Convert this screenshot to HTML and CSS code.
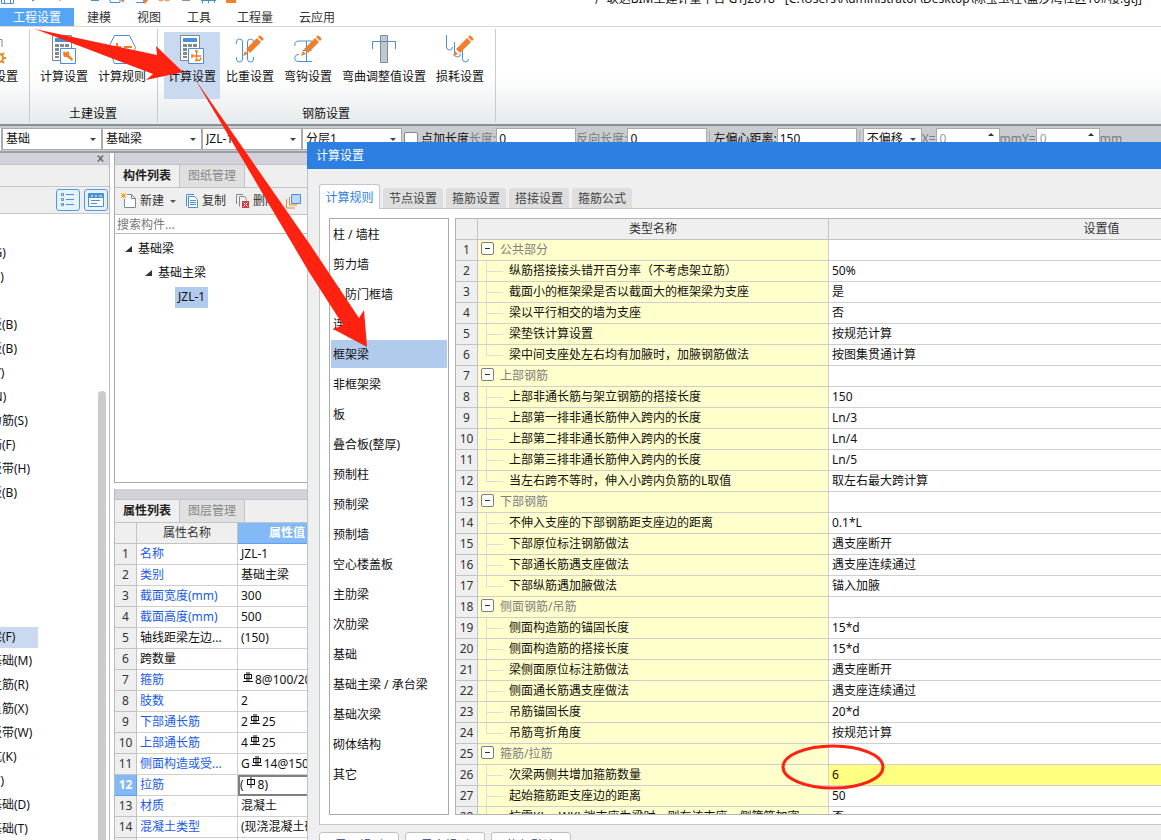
FILE: index.html
```html
<!DOCTYPE html>
<html lang="zh-CN">
<head>
<meta charset="utf-8">
<title>计算设置</title>
<link rel="stylesheet" href="styles.css">
</head>
<body>
<svg class="defs" width="0" height="0" aria-hidden="true">
  <symbol id="calc" viewBox="0 0 32 32">
    <path d="M4.500 2.500h19v25h-19z" fill="#fff" stroke="#7d8a94"/>
    <path d="M7 5h14v4H7z" fill="#4a90d9"/>
    <path d="M7 11h4v3H7zM12 11h4v3h-4zM17 11h4v3h-4zM7 15h4v3H7zM7 19h4v3H7zM7 23h4v2H7z" fill="#7d8a94"/>
    <path d="M12.500 15.500h15v15h-15z" fill="#fff" stroke="#4a90d9"/>
  </symbol>
  <symbol id="pencil" viewBox="0 0 22 22">
    <path d="M4 14 15 3l4 4L8 18zM16 2l1-1q1-1 2 0l2 2q1 1 0 2l-1 1zM3 16l3 3-5 2z" fill="#f07f2c"/>
  </symbol>
  <symbol id="rebar" viewBox="0 0 10 11">
    <path d="M1 2.500h8M1 6.500h8M1.500 2v5M8.500 2v5M4 0v10M6 0v10M0 9.500h10" fill="none" stroke="#111"/>
  </symbol>
  <symbol id="rebar-plain" viewBox="0 0 10 11">
    <path d="M1 2.500h8M1 7.500h8M1.500 2v6M8.500 2v6M5 0v11" fill="none" stroke="#111"/>
  </symbol>
</svg>

<div class="app">
  <header class="titlebar">
    <svg class="quick" width="250" height="8" viewBox="0 0 250 8" aria-hidden="true">
      <g fill="none" stroke="#4a90d9">
        <path d="M1.500 -2v6.500h12V-2M4.500 -2v6M10.500 -2v6M4 .5h7"/><path d="M29 -2l4 4 4-4"/>
        <path d="M91 1.500h8M110 3.500h10V-2M110 -2v5M136 3.500h8V-2M202.500 -2v6.500M208.500 -2v6.500M201 1.500h15M214.500 -2v6"/>
      </g>
      <path d="M56 -2l4 4 4-4" fill="none" stroke="#b9bdc2"/>
      <path d="M182 1.500h8" stroke="#89939b"/>
      <path d="M119 -2h5v5h-2zM143 -2h5v3l-3 4-2-3zM226 -2h10v6h-10z" fill="#f07f2c"/>
      <g fill="none" stroke="#f07f2c"><path d="M158 -2q0 4 3 4t3-4q0 4 3 4t4-4M238.500 -2v3"/></g>
    </svg>
    <span class="caption">广联达BIM土建计量平台 GTJ2018 - [C:\Users\Administrator\Desktop\陈宝玉柱\蓝莎湾社区10#楼.gtj]</span>
  </header>

  <nav class="menu">
    <a class="on" href="#">工程设置</a><a href="#">建模</a><a href="#">视图</a><a href="#">工具</a><a href="#">工程量</a><a href="#">云应用</a>
  </nav>

  <section class="ribbon">
    <div class="group edge">
      <div class="tools">
        <button class="tool"><svg width="32" height="32" viewBox="0 0 32 32"><path d="M6 6.500h18V14" fill="none" stroke="#7d8a94"/><circle cx="21" cy="25" r="4" fill="none" stroke="#e58a2f" stroke-width="2"/><path d="M21 18v3M21 29v3M14 25h3M25 25h3M16 20l2 2M24 28l2 2M26 20l-2 2M16 30l2-2" stroke="#e58a2f" stroke-width="2"/></svg>楼层设置</button>
      </div>
    </div>
    <div class="group">
      <div class="tools">
        <button class="tool"><svg width="32" height="32" viewBox="0 0 32 32"><use href="#calc"/><path d="M16 18l2 2 1-2q3 1 2 4l4 4-1 2-5-4q-4 1-4-4z" fill="#f07f2c"/></svg>计算设置</button>
        <button class="tool"><svg width="32" height="32" viewBox="0 0 32 32"><path d="M8.500 2.500h15l6 12-6 16h-15l-6-16z" fill="#fff" stroke="#4a90d9"/><path d="M7 14h8M11 10v8M18 14h8" stroke="#f07f2c" stroke-width="2"/></svg>计算规则</button>
      </div>
      <span class="group-name">土建设置</span>
    </div>
    <div class="group">
      <div class="tools">
        <button class="tool on"><svg width="32" height="32" viewBox="0 0 32 32"><use href="#calc"/><path d="M16 23h9M20.500 18v9M16 21v4M22 18h-3M19 27.500h3q3 0 3-3" fill="none" stroke="#f07f2c" stroke-width="1.500"/></svg>计算设置</button>
        <button class="tool"><svg width="32" height="32" viewBox="0 0 32 32"><path d="M2.500 11V9q0-3 3-3t3 3v17q0 3-3 3t-3-3v-2M19.500 24v2q0 3-3 3t-3-3V9q0-3 3-3t3 3" fill="none" stroke="#4a90d9"/><use href="#pencil" x="8" y="2" width="22" height="22"/></svg>比重设置</button>
        <button class="tool"><svg width="32" height="32" viewBox="0 0 32 32"><path d="M3 13q-1-5 4-5h13M10.500 17.500h9M7 21.500q-5 0-4 5 0 2 4 2h13M14.500 8v20" fill="none" stroke="#4a90d9"/><use href="#pencil" x="8" y="2" width="22" height="22"/></svg>弯钩设置</button>
        <button class="tool wide"><svg width="32" height="32" viewBox="0 0 32 32"><path d="M12.500 2.500h7v27h-7z" fill="#c3c8cc" stroke="#7d8a94"/><path d="M4.500 16V8.500h23V16" fill="none" stroke="#4a90d9"/></svg>弯曲调整值设置</button>
        <button class="tool"><svg width="32" height="32" viewBox="0 0 32 32"><path d="M2.500 2v12q0 3 3 3t3-3M10.500 9v12q0 3 3 3t3-3M18.500 17v9q0 3 3 3t3-3" fill="none" stroke="#4a90d9"/><use href="#pencil" x="8" y="2" width="22" height="22"/></svg>损耗设置</button>
      </div>
      <span class="group-name">钢筋设置</span>
    </div>
  </section>

  <form class="fields">
    <span class="stub"></span>
    <span class="pick"><select aria-label="构件大类"><option>基础</option></select></span>
    <span class="pick"><select aria-label="构件类型"><option>基础梁</option></select></span>
    <span class="pick"><select aria-label="构件"><option>JZL-1</option></select></span>
    <span class="pick"><select aria-label="分层"><option>分层1</option></select></span>
    <label class="check"><input type="checkbox">点加长度</label>
    <label class="dim">长度:<input class="num" value="0"></label>
    <label class="dim">反向长度:<input class="num" value="0"></label>
    <i class="sep"></i>
    <label>左偏心距离:<input class="num" value="150"></label>
    <i class="sep"></i>
    <span class="pick short"><select aria-label="偏移"><option>不偏移</option></select></span>
    <label class="dim axis">X=<span class="spin"><input value="0"></span></label>
    <label class="dim axis">mmY=<span class="spin"><input value="0"></span></label>
    <span class="dim">mm</span>
  </form>

  <main class="work">
    <aside class="modules">
      <div class="strip"><button class="close" aria-label="关闭"><svg width="7" height="7" viewBox="0 0 7 7"><path d="M0 .5h2l1.500 2 1.500-2h2L4.500 3.500 7 6.500H5l-1.500-2-1.500 2H0l2.500-3z" fill="#666"/></svg></button></div>
      <div class="blank"></div>
      <div class="views">
        <button aria-label="列表"><svg width="14" height="16" viewBox="0 0 14 16"><path d="M.5 1.500h2v2h-2zM.5 6.500h2v2h-2zM.5 11.500h2v2h-2zM5 2.500h8M5 7.500h8M5 12.500h8" fill="none" stroke="#4a90d9"/></svg></button>
        <button aria-label="面板"><svg width="16" height="14" viewBox="0 0 16 14"><path d="M.5.5h15v13H.5z" fill="#fff" stroke="#4a90d9"/><path d="M1 1h14v4H1z" fill="#4a90d9"/><path d="M3 3h2M7 3h2M11 3h3" stroke="#fff"/><path d="M3 7.500h9M3 10.500h6" stroke="#4a90d9"/></svg></button>
      </div>
      <div class="scroll">
        <ul class="module-list">
          <li>连梁(G)</li><li>圈梁(E)</li>
          <li class="after1">现浇板(B)</li><li>螺旋板(B)</li><li>柱帽(V)</li><li>板洞(N)</li><li>板受力筋(S)</li><li>板负筋(F)</li><li>楼层板带(H)</li><li>坡道板(B)</li>
          <li class="after5"><b>基础梁(F)</b></li><li>筏板基础(M)</li><li>筏板主筋(R)</li><li>筏板负筋(X)</li><li>基础板带(W)</li><li>集水坑(K)</li><li>柱墩(Y)</li><li>独立基础(D)</li><li>条形基础(T)</li>
        </ul>
        <div class="thumb"></div>
      </div>
    </aside>

    <div class="docks">
      <section class="components">
        <div class="strip"></div>
        <div class="dock-tabs"><button class="on">构件列表</button><button>图纸管理</button></div>
        <div class="actions">
          <button><svg width="16" height="16" viewBox="0 0 16 16"><path d="M3.500 1.500h7l4 4v9h-11zM10.500 1.500v4h4" fill="#fff" stroke="#7d8a94"/><path d="M0 0h6v6H0z" fill="#efefef"/><path d="M0 0l5 5M5 0L0 5M2.500 0v5M0 2.500h5" stroke="#f5a623"/></svg>新建<i class="caret"></i></button>
          <button><svg width="14" height="16" viewBox="0 0 14 16"><path d="M9 1.500H1.500V13" fill="none" stroke="#4a90d9"/><path d="M3.500 3.500h6l3 3v8h-9z" fill="#fff" stroke="#4a90d9"/><path d="M5 7.500h6M5 9.500h6M5 11.500h6" stroke="#4a90d9"/></svg>复制</button>
          <button><svg width="15" height="16" viewBox="0 0 15 16"><path d="M8 1.500H1.500V11M4.500 13.500v-10h5l2 3v1" fill="none" stroke="#7d8a94"/><path d="M7 8h7v7H7z" fill="#d9363e"/><path d="M8.500 9.500l4 4M12.500 9.500l-4 4" stroke="#fff"/></svg>删除</button>
          <button aria-label="层间复制"><svg width="16" height="16" viewBox="0 0 16 16"><path d="M.5 6v9H9M3.500 4v8H11" fill="none" stroke="#e58a2f"/><path d="M5.500 1.500h9v9h-9z" fill="#bcd7f7" stroke="#4a90d9"/></svg></button>
        </div>
        <input class="search" type="search" placeholder="搜索构件..." aria-label="搜索构件">
        <ul class="tree">
          <li class="l1"><i class="open"></i>基础梁</li>
          <li class="l2"><i class="open"></i>基础主梁</li>
          <li class="l3"><b>JZL-1</b></li>
        </ul>
      </section>

      <section class="props">
        <div class="strip"></div>
        <div class="dock-tabs"><button class="on">属性列表</button><button>图层管理</button></div>
        <table class="grid prop-grid">
          <colgroup><col class="c-no"><col class="c-name"><col class="c-val"></colgroup>
          <thead><tr><th></th><th>属性名称</th><th class="hot">属性值</th></tr></thead>
          <tbody>
            <tr><th>1</th><td class="blue">名称</td><td>JZL-1</td></tr>
            <tr><th>2</th><td class="blue">类别</td><td>基础主梁</td></tr>
            <tr><th>3</th><td class="blue">截面宽度(mm)</td><td>300</td></tr>
            <tr><th>4</th><td class="blue">截面高度(mm)</td><td>500</td></tr>
            <tr><th>5</th><td>轴线距梁左边...</td><td>(150)</td></tr>
            <tr><th>6</th><td>跨数量</td><td></td></tr>
            <tr><th>7</th><td class="blue">箍筋</td><td><svg class="bar" width="10" height="11"><use href="#rebar"/></svg>8@100/200(4)</td></tr>
            <tr><th>8</th><td class="blue">肢数</td><td>2</td></tr>
            <tr><th>9</th><td class="blue">下部通长筋</td><td>2<svg class="bar" width="10" height="11"><use href="#rebar"/></svg>25</td></tr>
            <tr><th>10</th><td class="blue">上部通长筋</td><td>4<svg class="bar" width="10" height="11"><use href="#rebar"/></svg>25</td></tr>
            <tr><th>11</th><td class="blue">侧面构造或受...</td><td>G<svg class="bar" width="10" height="11"><use href="#rebar"/></svg>14@150</td></tr>
            <tr><th class="hot">12</th><td class="blue">拉筋</td><td class="cursor">(<svg class="bar" width="10" height="11"><use href="#rebar-plain"/></svg>8)</td></tr>
            <tr><th>13</th><td class="blue">材质</td><td>混凝土</td></tr>
            <tr><th>14</th><td class="blue">混凝土类型</td><td>(现浇混凝土碎石)</td></tr>
            <tr><th></th><td></td><td></td></tr>
          </tbody>
        </table>
      </section>
    </div>
  </main>

  <section class="dialog" role="dialog" aria-label="计算设置">
    <h1>计算设置</h1>
    <div class="dialog-body">
      <div class="tabs">
        <button class="on">计算规则</button><button>节点设置</button><button>箍筋设置</button><button>搭接设置</button><button>箍筋公式</button>
      </div>
      <div class="sheet">
        <ul class="kinds">
          <li>柱 / 墙柱</li><li>剪力墙</li><li>人防门框墙</li><li>连梁</li><li class="on">框架梁</li><li>非框架梁</li><li>板</li><li>叠合板(整厚)</li><li>预制柱</li><li>预制梁</li><li>预制墙</li><li>空心楼盖板</li><li>主肋梁</li><li>次肋梁</li><li>基础</li><li>基础主梁 / 承台梁</li><li>基础次梁</li><li>砌体结构</li><li>其它</li>
        </ul>
        <div class="rules">
          <table class="grid rule-grid">
            <colgroup><col class="r-no"><col class="r-name"><col class="r-val"></colgroup>
            <thead><tr><th></th><th>类型名称</th><th>设置值</th></tr></thead>
            <tbody>
              <tr class="head"><th>1</th><td>公共部分</td><td></td></tr>
              <tr><th>2</th><td>纵筋搭接接头错开百分率（不考虑架立筋）</td><td>50%</td></tr>
              <tr><th>3</th><td>截面小的框架梁是否以截面大的框架梁为支座</td><td>是</td></tr>
              <tr><th>4</th><td>梁以平行相交的墙为支座</td><td>否</td></tr>
              <tr><th>5</th><td>梁垫铁计算设置</td><td>按规范计算</td></tr>
              <tr class="last"><th>6</th><td>梁中间支座处左右均有加腋时，加腋钢筋做法</td><td>按图集贯通计算</td></tr>
              <tr class="head"><th>7</th><td>上部钢筋</td><td></td></tr>
              <tr><th>8</th><td>上部非通长筋与架立钢筋的搭接长度</td><td>150</td></tr>
              <tr><th>9</th><td>上部第一排非通长筋伸入跨内的长度</td><td>Ln/3</td></tr>
              <tr><th>10</th><td>上部第二排非通长筋伸入跨内的长度</td><td>Ln/4</td></tr>
              <tr><th>11</th><td>上部第三排非通长筋伸入跨内的长度</td><td>Ln/5</td></tr>
              <tr class="last"><th>12</th><td>当左右跨不等时，伸入小跨内负筋的L取值</td><td>取左右最大跨计算</td></tr>
              <tr class="head"><th>13</th><td>下部钢筋</td><td></td></tr>
              <tr><th>14</th><td>不伸入支座的下部钢筋距支座边的距离</td><td>0.1*L</td></tr>
              <tr><th>15</th><td>下部原位标注钢筋做法</td><td>遇支座断开</td></tr>
              <tr><th>16</th><td>下部通长筋遇支座做法</td><td>遇支座连续通过</td></tr>
              <tr class="last"><th>17</th><td>下部纵筋遇加腋做法</td><td>锚入加腋</td></tr>
              <tr class="head"><th>18</th><td>侧面钢筋/吊筋</td><td></td></tr>
              <tr><th>19</th><td>侧面构造筋的锚固长度</td><td>15*d</td></tr>
              <tr><th>20</th><td>侧面构造筋的搭接长度</td><td>15*d</td></tr>
              <tr><th>21</th><td>梁侧面原位标注筋做法</td><td>遇支座断开</td></tr>
              <tr><th>22</th><td>侧面通长筋遇支座做法</td><td>遇支座连续通过</td></tr>
              <tr><th>23</th><td>吊筋锚固长度</td><td>20*d</td></tr>
              <tr class="last"><th>24</th><td>吊筋弯折角度</td><td>按规范计算</td></tr>
              <tr class="head"><th>25</th><td>箍筋/拉筋</td><td></td></tr>
              <tr><th>26</th><td>次梁两侧共增加箍筋数量</td><td class="edited">6</td></tr>
              <tr><th>27</th><td>起始箍筋距支座边的距离</td><td>50</td></tr>
              <tr><th>28</th><td>抗震KL、WKL端支座为梁时，则在该支座一侧箍筋加密</td><td>否</td></tr>
            </tbody>
          </table>
        </div>
      </div>
      <div class="foot"><button>导入规则</button><button>导出规则</button><button>恢复默认</button></div>
    </div>
  </section>

  <svg class="marks" width="900" height="800" viewBox="0 0 900 800" aria-hidden="true">
    <path d="M35 29 157 55 156 46 183 72 146 80 153 74zM195 79 311 246 359 318 364 310 367 347 333 329 343 325 309 272z" fill="#ff2211"/>
    <ellipse cx="833" cy="767" rx="50" ry="21" fill="none" stroke="#ff2211" stroke-width="3"/>
  </svg>
</div>
</body>
</html>
```

FILE: styles.css
```css
* { box-sizing: border-box; }
body, h1, ul { margin: 0; padding: 0; }
ul { list-style: none; }
body, button, input, select {
  font: 12px/16px "Noto Sans", "Noto Sans CJK SC", sans-serif;
  color: #111;
}
button { border: 0; background: none; padding: 0; white-space: nowrap; }
.defs { position: absolute; }
.app {
  position: relative;
  display: flex;
  flex-direction: column;
  height: 100vh;
  overflow: hidden;
  background: #fff;
}

/* title bar and menu */
.titlebar {
  flex: none;
  display: flex;
  align-items: flex-end;
  justify-content: space-between;
  height: 8px;
  padding: 0 19px 1px 0;
  overflow: hidden;
  white-space: nowrap;
}
.menu { flex: none; display: flex; height: 19px; border-bottom: 1px solid #d8d8d8; }
.menu a { padding: 2px 13px 0; color: #333; text-decoration: none; }
.menu .on { background: #56a4f5; color: #fff; }

/* ribbon */
.ribbon {
  flex: none;
  display: flex;
  height: 99px;
  padding: 2px 0;
  background: linear-gradient(#fff 50%, #e6eaec);
  border-bottom: 2px solid #8a9097;
}
.group {
  display: flex;
  flex-direction: column;
  align-items: center;
  justify-content: space-between;
  padding: 3px 7px 0 6px;
  border-right: 1px solid #c8cbce;
}
.edge { width: 30px; align-items: flex-end; justify-content: flex-start; }
.tools { display: flex; gap: 2px; }
.tool {
  display: flex;
  flex-direction: column;
  align-items: center;
  justify-content: flex-start;
  gap: 4px;
  width: 56px;
  height: 67px;
  padding-top: 1px;
}
.tool.wide { width: 92px; }
.tool.on { background: #c9d9f0; }

/* field row */
.fields {
  flex: none;
  display: flex;
  align-items: center;
  height: 27px;
  background: #c9ccd1;
  border-bottom: 2px solid #9a9fa5;
  white-space: nowrap;
}
.stub { width: 2px; height: 22px; background: #fff; border-right: 1px solid #aaa; }
.pick { position: relative; width: 100px; }
.pick::after, .spin::after {
  content: "";
  position: absolute;
  right: 6px;
  top: 10px;
  border: 3px solid transparent;
  border-top-color: #444;
  border-bottom: 0;
}
.pick select, .num, .spin input {
  appearance: none;
  width: 100%;
  height: 22px;
  padding: 0 3px;
  border: 1px solid #aaa;
  border-radius: 0;
  background: #fff;
}
.short { width: 59px; }
.fields label { display: flex; align-items: center; }
.check input {
  appearance: none;
  width: 14px;
  height: 14px;
  margin: 0 3px 0 2px;
  border: 1px solid #888;
  border-radius: 2px;
  background: #fff;
}
.fields .num { width: 80px; padding-left: 2px; }
.dim { color: #7c7c7c; }
.axis input { color: #999; }
.spin { position: relative; width: 64px; }
.spin::after { top: 5px; border-top: 0; border-bottom: 3px solid #333; }
.sep { width: 1px; height: 16px; margin: 0 3px 0 2px; background: #aaadb1; }

/* docked panels */
.work { flex: 1; display: flex; gap: 4px; min-height: 0; }
.strip { flex: none; height: 12px; background: #d2d3da; border-bottom: 1px solid #c3c4ca; }
.modules {
  width: 110px;
  display: flex;
  flex-direction: column;
  border-right: 1px solid #bbb;
}
.modules .strip { display: flex; align-items: center; justify-content: flex-end; padding-right: 5px; }
.close { display: flex; }
.blank { flex: none; height: 21px; background: #efefef; }
.views {
  flex: none;
  display: flex;
  align-items: center;
  justify-content: flex-end;
  gap: 4px;
  height: 28px;
  padding-right: 1px;
  background: #efefef;
  border: solid #c6c6c6;
  border-width: 1px 0;
}
.views button {
  display: flex;
  align-items: center;
  justify-content: center;
  width: 24px;
  height: 22px;
  border: 1px solid #4a9bf0;
  border-radius: 3px;
  background: #e8f2fd;
}
.scroll { flex: 1; display: flex; min-height: 0; overflow: hidden; }
.module-list { flex: 1; margin-left: -34px; padding-top: 27px; white-space: nowrap; }
.module-list li { height: 24px; line-height: 24px; }
.module-list .after1 { margin-top: 24px; }
.module-list .after5 { margin-top: 120px; }
.module-list b {
  display: block;
  width: 72px;
  padding-bottom: 1px;
  line-height: 20px;
  font-weight: 400;
  background: #c9d9f0;
}
.module-list .after5 { padding-top: 2px; }
.thumb { width: 8px; margin: 177px 3px 0 0; border-radius: 4px 4px 0 0; background: #ccc; }

.docks { width: 193px; display: flex; flex-direction: column; gap: 6px; overflow: hidden; }
.components { display: flex; flex-direction: column; flex: none; height: 330px; border: 1px solid #aaa; border-width: 0 0 1px 1px; }
.dock-tabs { flex: none; display: flex; height: 23px; background: #efefef; border-bottom: 1px solid #c3c4ca; }
.dock-tabs button { width: 65px; color: #888; background: #e0e0e0; border-right: 1px solid #c3c4ca; }
.dock-tabs .on { color: #222; font-weight: 700; background: #efefef; }
.actions {
  flex: none;
  display: flex;
  gap: 9px;
  height: 27px;
  padding-left: 6px;
  background: #efefef;
  border-bottom: 1px solid #c3c4ca;
}
.actions button { flex: none; display: flex; align-items: center; gap: 3px; color: #333; }
.caret { margin-left: 3px; border: 3px solid transparent; border-top-color: #555; border-bottom: 0; }
.search {
  flex: none;
  appearance: none;
  height: 19px;
  padding: 0 2px;
  border: 0;
  border-bottom: 1px solid #bbb;
  border-radius: 0;
}
.search::placeholder { color: #777; opacity: 1; }
.tree { padding-top: 3px; }
.tree li { display: flex; align-items: center; gap: 6px; height: 24px; }
.open { border: solid transparent; border-width: 0 0 6px 7px; border-bottom-color: #333; }
.l1 { padding-left: 10px; }
.l2 { padding-left: 30px; }
.l3 { padding-left: 60px; }
.tree b { padding: 2px 3px 3px; font-weight: 400; background: #b1cbed; }

.props { border-left: 1px solid #bbb; }
.props .strip { height: 11px; }

/* tables */
.grid { table-layout: fixed; border-collapse: separate; border-spacing: 0; }
.grid th, .grid td {
  height: 21px;
  padding: 0 3px;
  overflow: hidden;
  white-space: nowrap;
  text-align: left;
  font-weight: 400;
  border: solid #cfcfcf;
  border-width: 0 1px 1px 0;
}
.grid th { padding: 0; text-align: center; color: #333; background: #efefef; border-color: #c3c3c3; }
.grid .hot { color: #fff; font-weight: 700; background: #84b9f8; border-color: #5fa1ec; }
.prop-grid { width: 222px; }
.c-no { width: 22px; }
.c-name { width: 101px; }
.blue { color: #1a5be8; }
.grid .cursor { padding-left: 2px; outline: 2px solid #808080; outline-offset: -2px; }
.bar { margin: 0 2px; vertical-align: 1px; }
.grid .bar { margin-top: -2px; }

/* dialog */
.dialog {
  position: absolute;
  left: 307px;
  top: 142px;
  right: 0;
  bottom: 0;
  display: flex;
  flex-direction: column;
  overflow: hidden;
  background: #efefef;
}
.dialog h1 {
  flex: none;
  height: 27px;
  padding-left: 9px;
  font-size: 12px;
  line-height: 27px;
  font-weight: 400;
  color: #fff;
  background: #2d7fe2;
}
.dialog-body {
  flex: 1;
  display: flex;
  flex-direction: column;
  min-height: 0;
  padding: 15px 0 0 11px;
  border-left: 1px solid #b9c3cf;
}
.tabs { flex: none; display: flex; align-items: flex-end; gap: 3px; height: 24px; }
.tabs button {
  width: 60px;
  height: 20px;
  padding-top: 1px;
  border-radius: 3px 3px 0 0;
  color: #444;
  background: #dedede;
}
.tabs .on {
  width: 61px;
  height: 25px;
  margin-bottom: -1px;
  border: 1px solid #c3c6cc;
  border-bottom: 0;
  color: #2d7fe2;
  background: #fff;
  z-index: 1;
}
.sheet {
  flex: 1;
  display: flex;
  gap: 6px;
  min-height: 0;
  padding: 9px 0 9px 9px;
  background: #fff;
  border: 1px solid #c3c6cc;
  border-right: 0;
}
.kinds {
  flex: none;
  display: flex;
  flex-direction: column;
  gap: 2px;
  width: 120px;
  padding: 1px 1px 0;
  border: 1px solid #aaa;
}
.kinds li { padding: 2px 0 0 2px; line-height: 26px; }
.kinds .on { background: #b1cbed; }
.rules { flex: 1; overflow: hidden; border: 1px solid #b5b5b5; border-right: 0; }
.rule-grid { width: 919px; }
.r-no { width: 22px; }
.r-name { width: 351px; }
.rule-grid td:nth-child(2) {
  padding-left: 31px;
  background:
    linear-gradient(#ddd, #ddd) 8px 0 / 1px 21px no-repeat,
    linear-gradient(#ddd, #ddd) 9px 10px / 16px 1px no-repeat,
    #ffffcc;
}
.rule-grid .last td:nth-child(2) { background-size: 1px 11px, 16px 1px, auto; }
.rule-grid .head td:nth-child(2) { padding-left: 3px; color: #808080; background: #ffffcc; }
.head td:nth-child(2)::before {
  content: "";
  display: inline-block;
  width: 11px;
  height: 11px;
  margin-right: 6px;
  vertical-align: -1px;
  border: 1px solid #808080;
  border-radius: 2px;
  background: linear-gradient(#333, #333) center / 5px 1px no-repeat #fff;
}
.grid .edited { background: #ffff80; }
.foot { flex: none; display: flex; gap: 6px; height: 15px; padding-top: 7px; }
.foot button {
  width: 80px;
  height: 28px;
  border: 1px solid #c0c0c0;
  border-radius: 3px;
  color: #1a3c8c;
  background: #fff;
}

/* annotations drawn above everything */
.marks { position: absolute; left: 0; top: 0; pointer-events: none; }
```
